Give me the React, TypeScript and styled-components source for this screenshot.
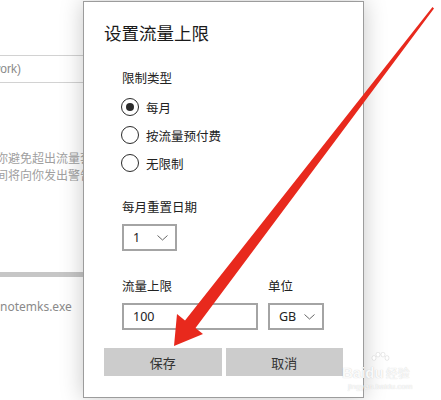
import React from 'react';
import styled, { createGlobalStyle } from 'styled-components';

const Global = createGlobalStyle`
  html, body { margin: 0; padding: 0; background: #fff; }
  body {
    width: 441px;
    height: 400px;
    overflow: hidden;
    font-family: "Noto Sans CJK SC", "Noto Sans", sans-serif;
  }
`;

const Page = styled.div`
  position: relative;
  width: 441px;
  height: 400px;
  overflow: hidden;
  background: #fff;
`;

const Backdrop = styled.div`
  display: flex;
  flex-direction: column;
  width: 120px;
  padding-top: 55px;
`;

const FieldBox = styled.div`
  height: 26px;
  border-top: 1px solid #d2d2d2;
  border-bottom: 1px solid #d2d2d2;
  display: flex;
  align-items: center;
  font-family: "Liberation Sans", Arial, sans-serif;
  font-size: 12px;
  color: #8a8a8a;
  white-space: nowrap;
  text-indent: -31px;
`;

const Desc = styled.div<{ $gap: number }>`
  margin-top: ${(p) => p.$gap}px;
  font-size: 12px;
  line-height: 17px;
  color: #a0a0a0;
  white-space: nowrap;
  text-indent: -16px;
`;

const GrayBar = styled.div`
  margin-top: 89px;
  height: 5px;
  background: #c6c6c6;
`;

const FileName = styled.div`
  margin-top: 21px;
  font-family: "Noto Sans", sans-serif;
  font-size: 12px;
  line-height: 17px;
  color: #8a8a8a;
  white-space: nowrap;
`;

const Dialog = styled.div`
  position: absolute;
  left: 83px;
  top: 1px;
  width: 281px;
  height: 397px;
  box-sizing: border-box;
  background: #fff;
  border: 1px solid #9c9c9c;
  box-shadow: 0 0 22px rgba(0, 0, 0, 0.22);
  display: flex;
  flex-direction: column;
  padding: 19px 20px 0 20px;
`;

const Title = styled.h1`
  margin: 0;
  font-size: 17.5px;
  line-height: 24px;
  font-weight: 400;
  color: #1a1a1a;
`;

const Form = styled.div`
  display: flex;
  flex-direction: column;
  padding-left: 18px;
  margin-top: 24px;
`;

const Label = styled.div<{ $gap?: number }>`
  margin-top: ${(p) => p.$gap ?? 0}px;
  font-size: 12.5px;
  line-height: 18px;
  color: #222;
  white-space: nowrap;
`;

const RadioGroup = styled.div`
  display: flex;
  flex-direction: column;
  margin-top: 6px;
`;

const RadioRow = styled.label`
  height: 28px;
  display: flex;
  align-items: center;
  gap: 7px;
  font-size: 12.5px;
  color: #222;
  margin-left: -1px;
`;

const RadioCircle = styled.span<{ $checked?: boolean }>`
  width: 18px;
  height: 18px;
  box-sizing: border-box;
  border: 1.6px solid #2b2b2b;
  border-radius: 50%;
  display: flex;
  align-items: center;
  justify-content: center;
  &::after {
    content: "";
    width: 8px;
    height: 8px;
    border-radius: 50%;
    background: #2b2b2b;
    display: ${(p) => (p.$checked ? 'block' : 'none')};
  }
`;

const SelectBox = styled.div<{ $width: number }>`
  width: ${(p) => p.$width}px;
  height: 27px;
  box-sizing: border-box;
  border: 2px solid #a4a4a4;
  background: #fff;
  display: flex;
  align-items: center;
  justify-content: space-between;
  padding: 0 7px 0 9px;
  font-family: "Noto Sans", sans-serif;
  font-size: 12.5px;
  color: #222;
`;

const InputBox = styled.div<{ $width: number }>`
  width: ${(p) => p.$width}px;
  height: 27px;
  box-sizing: border-box;
  border: 2px solid #a4a4a4;
  background: #fff;
  display: flex;
  align-items: center;
  padding-left: 9px;
  font-family: "Noto Sans", sans-serif;
  font-size: 12.5px;
  color: #222;
`;

const FieldRow = styled.div`
  display: flex;
  gap: 10px;
  margin-top: 26px;
`;

const FieldCol = styled.div`
  display: flex;
  flex-direction: column;
  gap: 8px;
`;

const ButtonRow = styled.div`
  display: grid;
  grid-template-columns: 1fr 1fr;
  gap: 4px;
  margin-top: 18px;
`;

const Button = styled.button`
  height: 28px;
  border: none;
  background: #cccccc;
  font-family: "Noto Sans CJK SC", sans-serif;
  font-size: 13px;
  color: #333;
  padding: 0;
`;

const Overlay = styled.svg`
  position: absolute;
  left: 0;
  top: 0;
  pointer-events: none;
`;

const Watermark = styled.div`
  position: absolute;
  left: 342px;
  top: 352px;
  display: flex;
  flex-direction: column;
  align-items: flex-start;
  color: rgba(255, 255, 255, 0.92);
  text-shadow: 0 0 1px rgba(0, 0, 0, 0.22);
  pointer-events: none;
`;

const MarkMain = styled.div`
  display: flex;
  align-items: flex-end;
  font-family: "Liberation Sans", Arial, sans-serif;
  font-size: 15px;
  font-weight: 700;
  line-height: 18px;
  margin-top: 8px;
`;

const MarkCn = styled.span`
  font-family: "Noto Sans CJK SC", sans-serif;
  font-size: 12px;
  font-weight: 400;
  margin-left: 2px;
`;

const MarkSub = styled.div`
  font-family: "Liberation Sans", Arial, sans-serif;
  font-size: 8px;
  line-height: 10px;
  margin-left: 6px;
`;

const Chevron = () => (
  <svg width="11" height="6" viewBox="0 0 11 6">
    <polyline points="0.5,0.5 5.5,5 10.5,0.5" fill="none" stroke="#666" strokeWidth="1" />
  </svg>
);

export default function App() {
  return (
    <Page>
      <Global />
      <Backdrop>
        <FieldBox>(Network)</FieldBox>
        <Desc $gap={66}>助你避免超出流量套餐</Desc>
        <Desc $gap={0}>时间将向你发出警告</Desc>
        <GrayBar />
        <FileName>notemks.exe</FileName>
      </Backdrop>

      <Dialog>
        <Title>设置流量上限</Title>
        <Form>
          <Label>限制类型</Label>
          <RadioGroup>
            <RadioRow>
              <RadioCircle $checked />
              每月
            </RadioRow>
            <RadioRow>
              <RadioCircle />
              按流量预付费
            </RadioRow>
            <RadioRow>
              <RadioCircle />
              无限制
            </RadioRow>
          </RadioGroup>
          <Label $gap={21}>每月重置日期</Label>
          <FieldCol style={{ marginTop: 8 }}>
            <SelectBox $width={55}>
              1
              <Chevron />
            </SelectBox>
          </FieldCol>
          <FieldRow>
            <FieldCol>
              <Label>流量上限</Label>
              <InputBox $width={136}>100</InputBox>
            </FieldCol>
            <FieldCol>
              <Label>单位</Label>
              <SelectBox $width={56}>
                GB
                <Chevron />
              </SelectBox>
            </FieldCol>
          </FieldRow>
        </Form>
        <ButtonRow>
          <Button>保存</Button>
          <Button>取消</Button>
        </ButtonRow>
      </Dialog>

      <Overlay width="441" height="400" viewBox="0 0 441 400">
        <polygon
          points="432.5,7 434,8.5 195.5,328 203,334 174,346 177,314 185,320.5"
          fill="#e8291d"
        />
      </Overlay>

      <Watermark>
        <svg width="20" height="14" viewBox="0 0 20 14" style={{ marginLeft: 28, marginBottom: -10 }}>
          <g fill="rgba(255,255,255,0.9)" stroke="rgba(0,0,0,0.15)" strokeWidth="0.6">
            <ellipse cx="4" cy="6" rx="2" ry="2.4" />
            <ellipse cx="8" cy="2.6" rx="2" ry="2.4" />
            <ellipse cx="13" cy="2.6" rx="2" ry="2.4" />
            <ellipse cx="17" cy="6" rx="2" ry="2.4" />
          </g>
        </svg>
        <MarkMain>
          Bai
          <span>du</span>
          <MarkCn>经验</MarkCn>
        </MarkMain>
        <MarkSub>jingyan.baidu.com</MarkSub>
      </Watermark>
    </Page>
  );
}
